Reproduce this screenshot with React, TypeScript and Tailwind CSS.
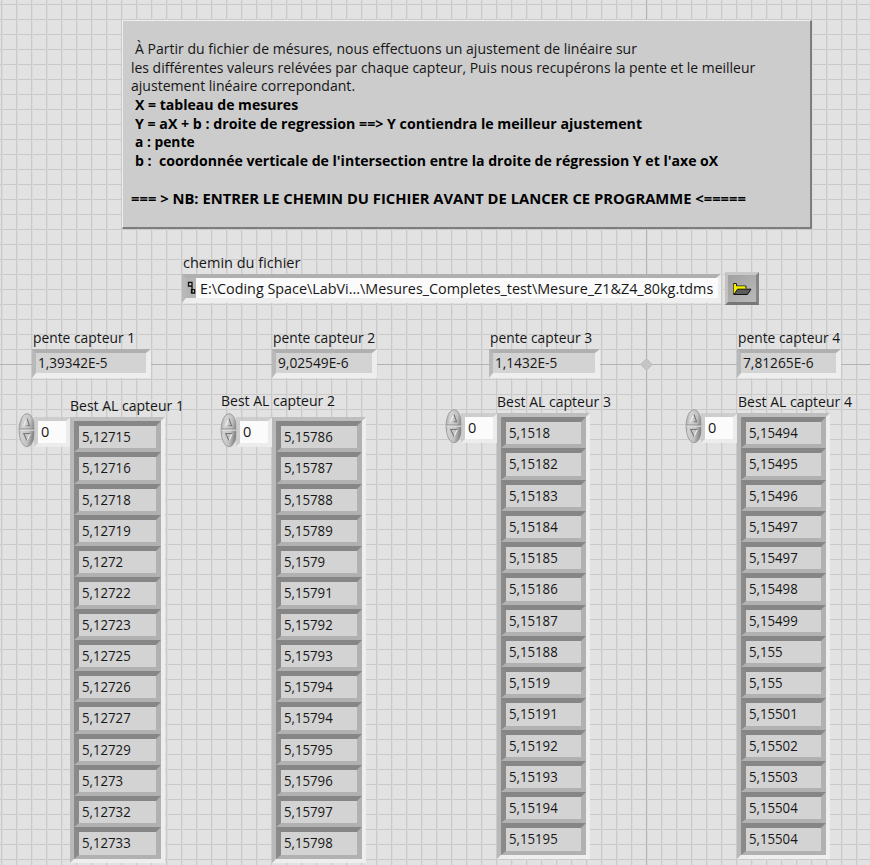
import { useLayoutEffect, useRef } from "react";

/** A single line of text, condensed or stretched horizontally to a given width. */
function Fit({ w, className = "", children }: { w: number; className?: string; children: string }) {
  const ref = useRef<HTMLSpanElement>(null);
  useLayoutEffect(() => {
    const el = ref.current;
    if (el && el.offsetWidth) el.style.transform = `scaleX(${w / el.offsetWidth})`;
  }, [w]);
  return (
    <span ref={ref} className={`block w-max origin-left whitespace-pre ${className}`}>
      {children}
    </span>
  );
}

const notes = [
  { text: "À Partir du fichier de mésures, nous effectuons un ajustement de linéaire sur", w: 502, indent: true, bold: false },
  { text: "les différentes valeurs relévées par chaque capteur, Puis nous recupérons la pente et le meilleur", w: 624, indent: false, bold: false },
  { text: "ajustement linéaire correpondant.", w: 224, indent: false, bold: false },
  { text: "X = tableau de mesures", w: 163, indent: true, bold: true },
  { text: "Y = aX + b : droite de regression ==> Y contiendra le meilleur ajustement", w: 507, indent: true, bold: true },
  { text: "a : pente", w: 60, indent: true, bold: true },
  { text: "b :  coordonnée verticale de l'intersection entre la droite de régression Y et l'axe oX", w: 583, indent: true, bold: true },
  { text: "", w: 0, indent: false, bold: false },
  { text: "=== > NB: ENTRER LE CHEMIN DU FICHIER AVANT DE LANCER CE PROGRAMME <=====", w: 615, indent: false, bold: true },
];

const slopes = [
  { label: "pente capteur 1", value: "1,39342E-5", w: 70, box: "ml-[32px] w-[119px]" },
  { label: "pente capteur 2", value: "9,02549E-6", w: 71, box: "ml-[121px] w-[105px]" },
  { label: "pente capteur 3", value: "1,1432E-5", w: 62, box: "ml-[112px] w-[111px]" },
  { label: "pente capteur 4", value: "7,81265E-6", w: 71, box: "ml-[137px] w-[104px]" },
];

const arrays = [
  {
    label: "Best AL capteur 1",
    col: "ml-[18px] w-[147px]",
    head: "pt-[8px] h-[28px] pl-[52px]",
    values: ["5,12715", "5,12716", "5,12718", "5,12719", "5,1272", "5,12722", "5,12723", "5,12725", "5,12726", "5,12727", "5,12729", "5,1273", "5,12732", "5,12733"],
  },
  {
    label: "Best AL capteur 2",
    col: "ml-[55px] w-[146px]",
    head: "pt-[3px] h-[28px] pl-[1px]",
    values: ["5,15786", "5,15787", "5,15788", "5,15789", "5,1579", "5,15791", "5,15792", "5,15793", "5,15794", "5,15794", "5,15795", "5,15796", "5,15797", "5,15798"],
  },
  {
    label: "Best AL capteur 3",
    col: "ml-[79px] w-[145px]",
    head: "pt-[4px] h-[24px] pl-[52px]",
    values: ["5,1518", "5,15182", "5,15183", "5,15184", "5,15185", "5,15186", "5,15187", "5,15188", "5,1519", "5,15191", "5,15192", "5,15193", "5,15194", "5,15195"],
  },
  {
    label: "Best AL capteur 4",
    col: "ml-[95px] w-[145px]",
    head: "pt-[4px] h-[24px] pl-[53px]",
    values: ["5,15494", "5,15495", "5,15496", "5,15497", "5,15497", "5,15498", "5,15499", "5,155", "5,155", "5,15501", "5,15502", "5,15503", "5,15504", "5,15504"],
  },
];

const sunken = "border-t-4 border-l-4 border-r-[5px] border-b-[5px] border-t-[#b0b0b0] border-l-[#b9b9b9] border-r-[#ededed] border-b-[#eeeeee]";

function Spinner() {
  return (
    <svg className="-mt-1 h-[35px] w-[18px] shrink-0" viewBox="0 0 18 35">
      <defs>
        <linearGradient id="knob" x1="0" x2="1" y1="0" y2="0.3">
          <stop offset="0" stopColor="#9b9b9b" />
          <stop offset="0.3" stopColor="#d2d2d2" />
          <stop offset="0.7" stopColor="#c2c2c2" />
          <stop offset="1" stopColor="#858585" />
        </linearGradient>
      </defs>
      <ellipse cx="9" cy="17.2" rx="8" ry="16.6" fill="url(#knob)" stroke="#959595" strokeWidth="0.8" />
      <path d="M1.5 16H16.5" stroke="#8a8a8a" />
      <path d="M1.5 17.2H16.5" stroke="#e4e4e4" />
      <path d="M5.7 12.5L8.9 5.5" stroke="#f2f2f2" strokeWidth="1.1" fill="none" />
      <path d="M8.9 5.5L11.6 12.7H8.7" stroke="#777777" strokeWidth="1.1" fill="none" />
      <path d="M12.3 20.5L9 27.5" stroke="#eeeeee" strokeWidth="1.1" fill="none" />
      <path d="M9 27.5L5.7 20.5H12.3" stroke="#777777" strokeWidth="1.1" fill="none" />
    </svg>
  );
}

export default function App() {
  return (
    <div className="relative h-[865px] w-[870px] overflow-hidden bg-[#e2e2e2] bg-[linear-gradient(90deg,transparent_1px,#cacaca_1px,#cacaca_2px,#dadada_2px,#dadada_3px,transparent_3px),linear-gradient(180deg,transparent_4px,#c9c9c9_4px,#c9c9c9_5px,transparent_5px)] bg-[length:15px_15px] font-['Open_Sans','Noto_Sans',sans-serif] text-[14.5px] leading-[18px] text-[#161616]">
      {/* origin axes of the front panel */}
      <div className="absolute top-0 left-[646px] h-full w-px bg-[#b2b2b2]" />
      <div className="absolute top-[364px] left-0 h-px w-full bg-[#b2b2b2]" />
      <svg className="absolute top-[358px] left-[640px] h-[13px] w-[13px]" viewBox="0 0 13 13">
        <path d="M6.5 .5L12.5 6.5L6.5 12.5L.5 6.5Z" fill="#c5c5c5" stroke="#b8b8b8" strokeWidth=".7" />
      </svg>

      <div className="relative flex h-full flex-col">
        <section className="mt-[20px] ml-[122px] h-[209px] w-[690px] shrink-0 border-t border-r-2 border-b-2 border-l border-t-[#eeeeee] border-r-[#7d7d7d] border-b-[#7d7d7d] border-l-[#eeeeee] bg-[#cccccc] pt-[19px] pl-[8px]">
          {notes.map((n, i) => (
            <div key={i} className={`h-[18.7px] ${n.indent ? "pl-[4px]" : ""}`}>
              {n.text && <Fit w={n.w} className={n.bold ? "font-bold text-black" : ""}>{n.text}</Fit>}
            </div>
          ))}
        </section>

        <section className="mt-[25px] ml-[182px] h-[75px] shrink-0">
          <Fit w={117} className="ml-[1px]">chemin du fichier</Fit>
          <div className="flex items-start">
            <div className={`mt-[2px] flex h-[29px] w-[539px] ${sunken}`}>
              <div className="flex w-[10px] shrink-0 items-center justify-center bg-[#b5b5b5]">
                <svg className="h-[14px] w-[9px]" viewBox="0 0 9 14">
                  <path d="M1.5 1.5H5V5H1.5ZM5 5V12M4.5 8.7H7.6V12H4.5Z" fill="#ddd" stroke="#111" strokeWidth="1.3" />
                </svg>
              </div>
              <div className="flex-1 bg-[#fbfbfb] pl-[4px] leading-[21px]">
                <Fit w={513}>{"E:\\Coding Space\\LabVi...\\Mesures_Completes_test\\Mesure_Z1&Z4_80kg.tdms"}</Fit>
              </div>
            </div>
            <div className="ml-[4px] flex h-[33px] w-[34px] items-center justify-center border-[3px] border-t-[#c8c8c8] border-r-[#858585] border-b-[#777777] border-l-[#c2c2c2] bg-linear-to-br from-[#a0a0a0] to-[#bababa]">
              <svg className="h-[14px] w-[20px] shrink-0" viewBox="0 0 20 14">
                <path d="M1.5 12.5V1.5H4.5V4H14V6.5" fill="#f4ee00" stroke="#222" />
                <path d="M2.5 2.5V11.5M3 5.3H13" fill="none" stroke="#f4ee00" strokeWidth="1.6" />
                <path d="M2 12.5L5.5 7.2H19L15.5 12.5Z" fill="#5b5b5b" stroke="#111" />
              </svg>
            </div>
          </div>
        </section>

        <section className="flex h-[63px] shrink-0">
          {slopes.map((s) => (
            <div key={s.label} className={`shrink-0 ${s.box}`}>
              <Fit w={102} className="ml-px">{s.label}</Fit>
              <div className={`mt-[2px] h-[29px] bg-[#d3d3d3] pl-[2px] leading-[20px] ${sunken}`}>
                <Fit w={s.w}>{s.value}</Fit>
              </div>
            </div>
          ))}
        </section>

        <section className="mt-[-3px] flex items-start">
          {arrays.map((a) => (
            <div key={a.label} className={`shrink-0 ${a.col}`}>
              <div className={a.head}>
                <Fit w={114}>{a.label}</Fit>
              </div>
              <div className="flex">
                <div className="flex w-[52px] shrink-0">
                  <Spinner />
                  <div className="-mr-[1px] -ml-[2px] h-[30px] flex-1 border-t-4 border-r-[5px] border-b-[4px] border-l-4 border-t-[#c9c9c9]/80 border-r-[#eeeeee]/90 border-b-[#eeeeee]/90 border-l-[#c9c9c9]/80">
                    <div className="h-full bg-[#fbfbfb] pl-[3px] leading-[21px]">
                      <Fit w={8}>0</Fit>
                    </div>
                  </div>
                </div>
                <div className="flex-1 border-4 border-t-[#bebebe] border-r-[#eeeeee] border-b-[#eeeeee] border-l-[#b9b9b9]">
                  {a.values.map((v, i) => (
                    <div key={i} className="h-[31.25px] border-t-[5px] border-r-[5px] border-b-4 border-l-[5px] border-t-[#868686] border-r-[#b1b1b1] border-b-[#b1b1b1] border-l-[#8a8a8a] bg-[#d3d3d3] pl-[3px] leading-[22px]">
                      <span className="block w-max origin-left scale-x-[0.91]">{v}</span>
                    </div>
                  ))}
                </div>
              </div>
            </div>
          ))}
        </section>
      </div>
    </div>
  );
}
